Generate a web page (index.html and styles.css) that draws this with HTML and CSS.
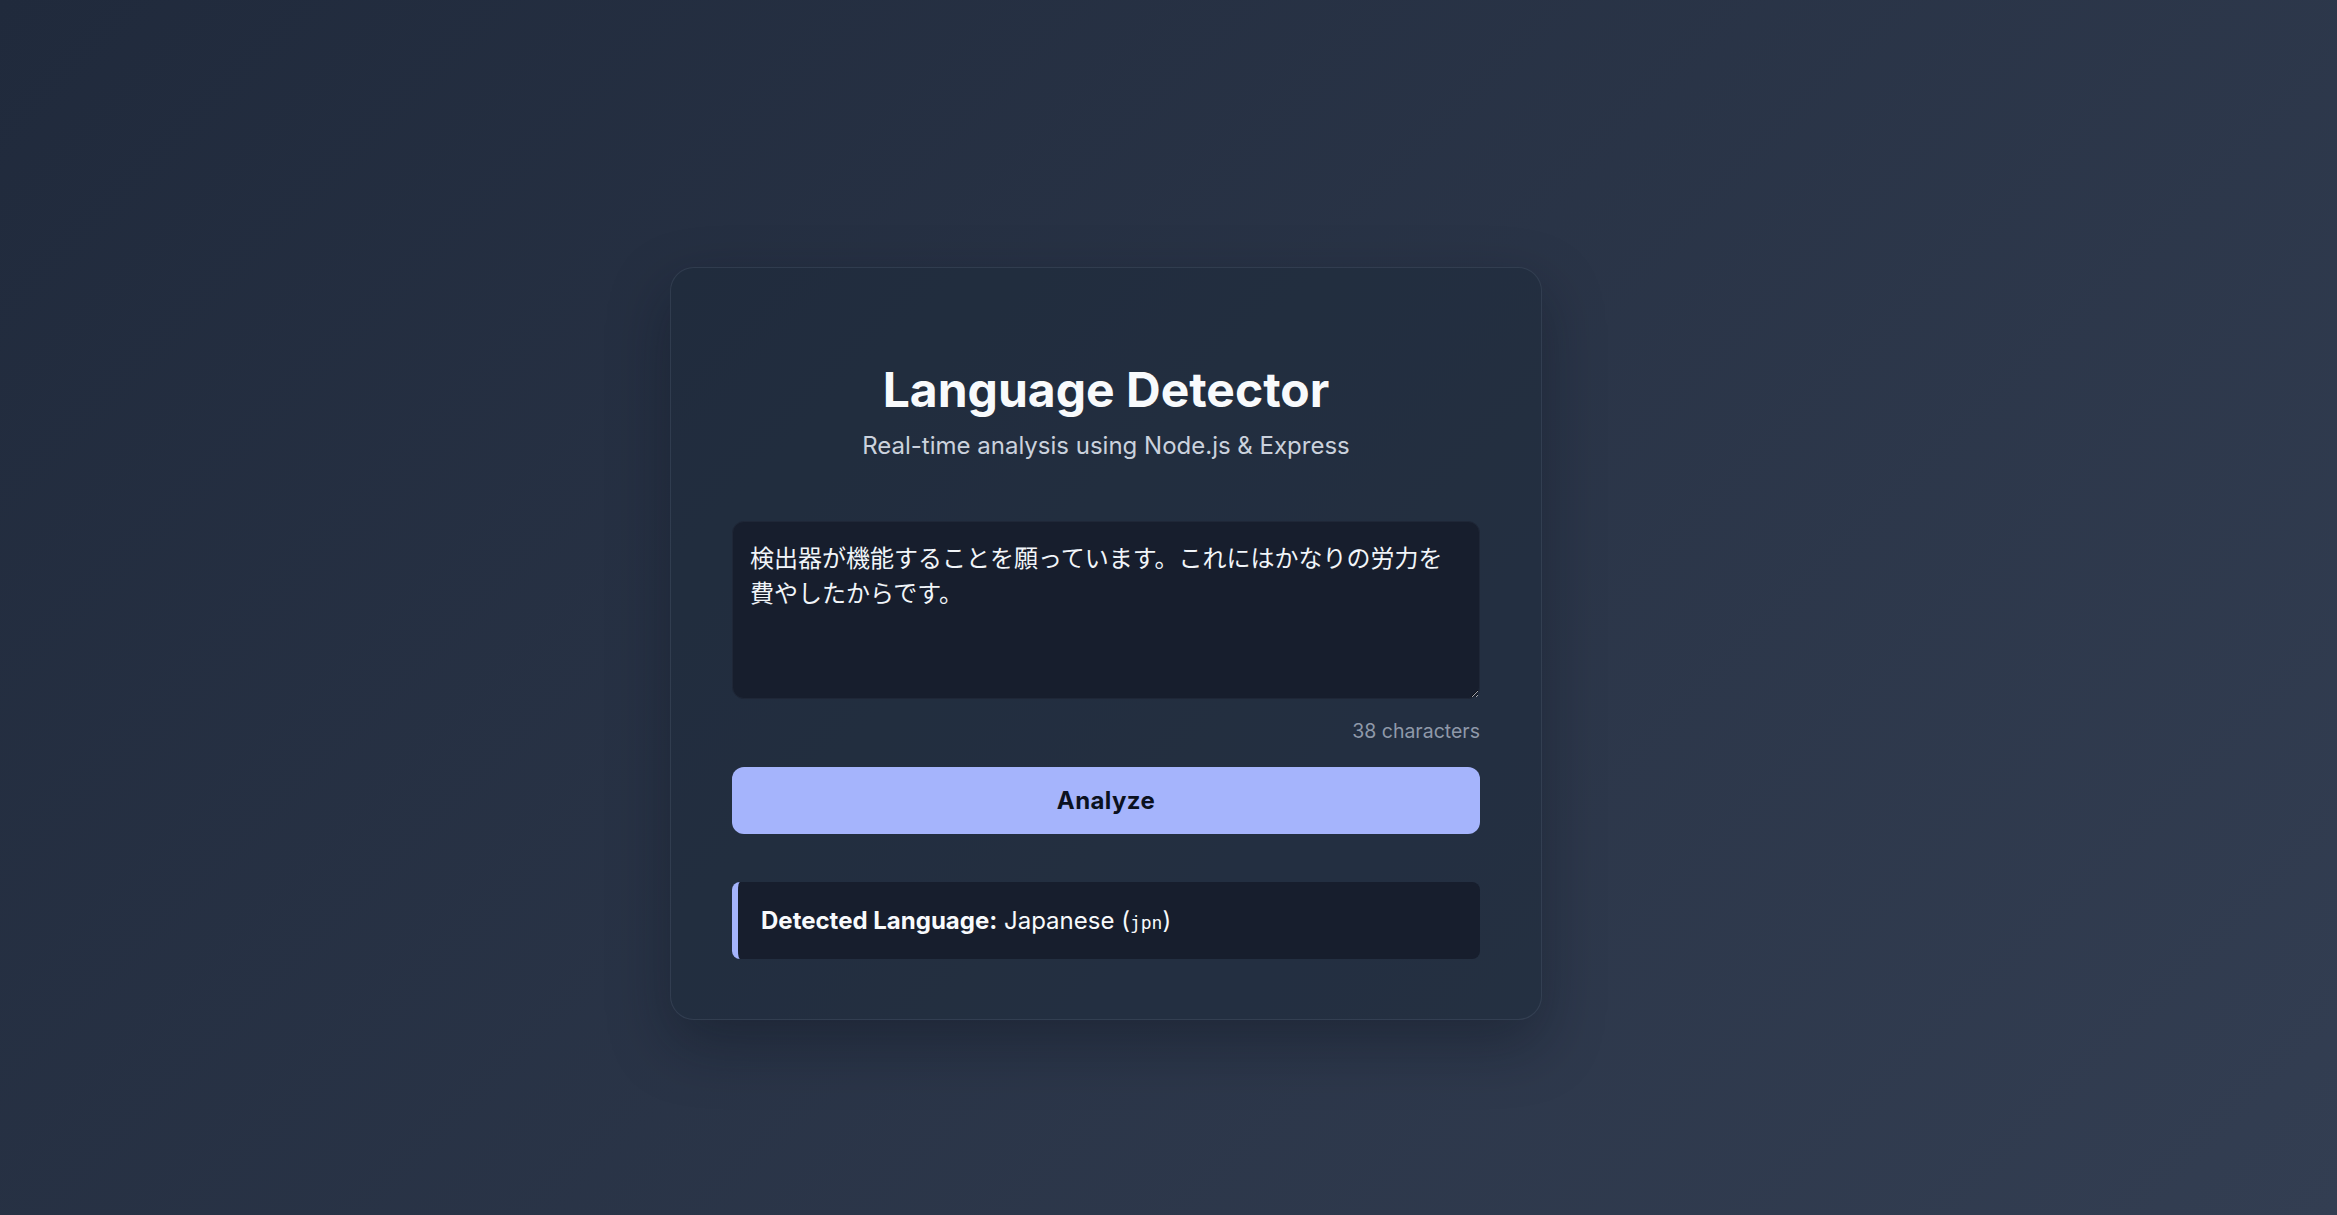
FILE: index.html
```html
<!DOCTYPE html>
<html lang="en">
<head>
<meta charset="utf-8">
<title>Language Detector</title>
<link rel="stylesheet" href="styles.css">
</head>
<body>
<main class="card">
  <header class="header">
    <h1 class="title">Language Detector</h1>
    <p class="subtitle">Real-time analysis using Node.js &amp; Express</p>
  </header>
  <textarea class="input" spellcheck="false">検出器が機能することを願っています。これにはかなりの労力を費やしたからです。</textarea>
  <div class="count">38 characters</div>
  <button class="btn" type="button">Analyze</button>
  <div class="result"><strong>Detected Language:</strong> Japanese (<code class="code">jpn</code>)</div>
</main>
</body>
</html>
```
FILE: styles.css
```css
* { box-sizing: border-box; }
html, body { height: 100%; }
body {
  margin: 0;
  min-height: 100vh;
  display: flex;
  justify-content: center;
  align-items: center;
  padding: 72px 125px 0 0;
  background: linear-gradient(135deg, #202a3c 0%, #333e52 100%);
  font-family: Inter, "Noto Sans CJK JP", sans-serif;
  color: #f8fafc;
}
.card {
  width: 872px;
  padding: 60px 61px;
  border: 1px solid rgba(148, 163, 184, 0.14);
  border-radius: 24px;
  background: rgba(30, 41, 59, 0.55);
  box-shadow: 0 24px 60px rgba(10, 15, 25, 0.35);
  display: flex;
  flex-direction: column;
}
.header { text-align: center; }
.title {
  margin: 32px 0 12px;
  font-size: 48px;
  font-weight: 700;
  line-height: normal;
  color: #f8fafc;
}
.subtitle {
  margin: 0 0 61px;
  font-size: 24px;
  line-height: normal;
  color: #cbd2dd;
}
.input {
  display: block;
  width: 100%;
  height: 178px;
  margin: 0;
  padding: 17px 17px;
  border: 1px solid #1f2737;
  border-radius: 12px;
  background: #171e2d;
  color: #f1f5f9;
  font-family: Inter, "Noto Sans CJK JP", sans-serif;
  font-size: 24px;
  line-height: normal;
  resize: vertical;
  outline: none;
}
.count {
  margin-top: 20px;
  text-align: right;
  font-size: 19.5px;
  line-height: normal;
  color: #8f99a9;
}
.btn {
  margin-top: 24px;
  width: 100%;
  height: 67px;
  border: none;
  border-radius: 12px;
  background: #a5b4fc;
  color: #0b1120;
  font-family: Inter, sans-serif;
  font-size: 24px;
  font-weight: 700;
  letter-spacing: 0.4px;
  cursor: pointer;
}
.result {
  margin-top: 48px;
  padding: 24px 24px 24px 23px;
  border-left: 6px solid #a5b4fc;
  border-radius: 8px;
  background: #171e2d;
  font-size: 24px;
  line-height: normal;
  color: #f8fafc;
}
.result strong { font-weight: 700; }
.code {
  font-family: "DejaVu Sans Mono", monospace;
  font-size: 0.75em;
}
```
